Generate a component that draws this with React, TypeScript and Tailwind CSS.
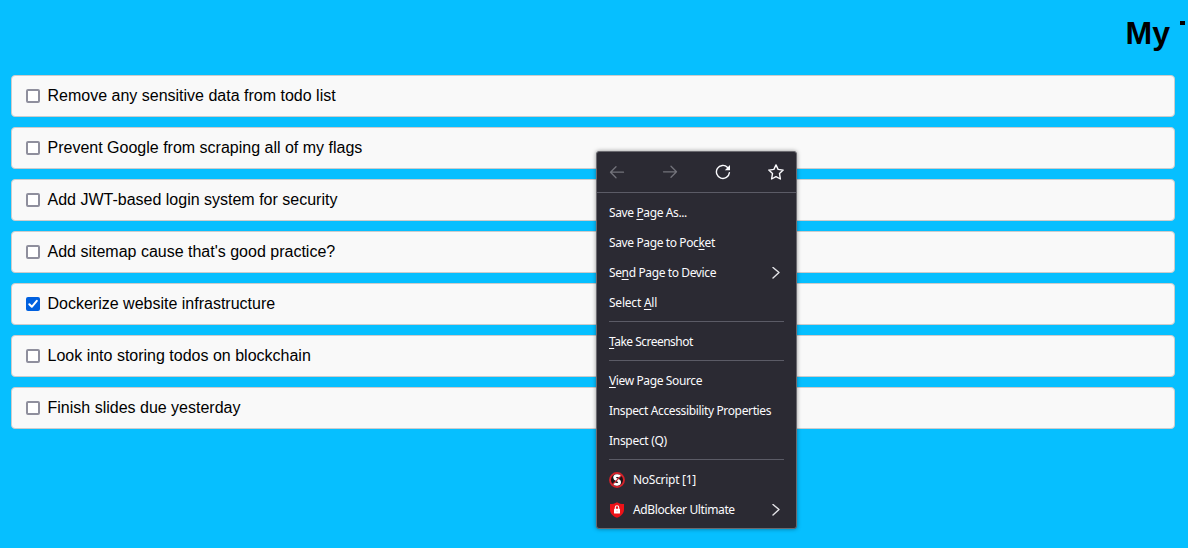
import React from "react";

const todos = [
  { text: "Remove any sensitive data from todo list" },
  { text: "Prevent Google from scraping all of my flags" },
  { text: "Add JWT-based login system for security" },
  { text: "Add sitemap cause that's good practice?" },
  { text: "Dockerize website infrastructure", done: true },
  { text: "Look into storing todos on blockchain" },
  { text: "Finish slides due yesterday" },
];

function Checkbox({ done }: { done?: boolean }) {
  if (done) {
    return (
      <span className="flex size-3.5 shrink-0 items-center justify-center rounded-[2px] bg-[#0060df]">
        <svg width="14" height="14" viewBox="0 0 14 14" fill="none" stroke="#fff" strokeWidth="2" strokeLinecap="round" strokeLinejoin="round">
          <path d="M3.3 7.3 5.8 9.8l5-6" />
        </svg>
      </span>
    );
  }
  return <span className="size-3.5 shrink-0 rounded-[2px] border-2 border-[#8f8f9d] bg-white" />;
}

function Key({ children }: { children: React.ReactNode }) {
  return <span className="underline decoration-1 underline-offset-2">{children}</span>;
}

function Chevron() {
  return (
    <svg className="ml-auto mr-1" width="8" height="12" viewBox="0 0 8 12" fill="none" stroke="#e4e4e8" strokeWidth="1.4" strokeLinecap="round" strokeLinejoin="round">
      <path d="M1 .5 7 5.5 1 11" />
    </svg>
  );
}

function Item({ icon, arrow, tracking = "tracking-[-0.38px]", children }: { icon?: React.ReactNode; arrow?: boolean; tracking?: string; children: React.ReactNode }) {
  return (
    <div className="flex h-[30px] items-center pl-3 pr-3">
      {icon && <span className="mr-2 flex size-4 shrink-0">{icon}</span>}
      <span className={`whitespace-pre ${tracking}`}>{children}</span>
      {arrow && <Chevron />}
    </div>
  );
}

function Separator() {
  return (
    <div className="h-[9px] px-3 pt-[3px]">
      <div className="h-px bg-[#5b5b66]" />
    </div>
  );
}

function Arrow({ flip }: { flip?: boolean }) {
  return (
    <svg className={flip ? "rotate-180" : ""} width="16" height="16" viewBox="0 0 16 16" fill="none" stroke="#73737b" strokeWidth="1.3" strokeLinecap="round" strokeLinejoin="round">
      <path d="M14.5 8.2h-13M7 2.7 1.5 8.2 7 13.7" />
    </svg>
  );
}

function Reload() {
  return (
    <svg width="16" height="16" viewBox="0 0 16 16" fill="none">
      <path d="M12.6 3.4A6.5 6.5 0 1 0 14.4 8.6" stroke="#fbfbfe" strokeWidth="1.4" strokeLinecap="round" />
      <path d="M15 1v4.7a.5.5 0 0 1-.5.5H9.8z" fill="#fbfbfe" />
    </svg>
  );
}

function Star() {
  return (
    <svg width="16" height="16" viewBox="0 0 16 16" fill="none" stroke="#fbfbfe" strokeWidth="1.4" strokeLinejoin="round">
      <path d="m8 .9 2.1 4.5 5.1.7-3.7 3.5.9 5.4L8 12.6l-4.4 2.4.9-5.4L.8 6.1l5.1-.7z" />
    </svg>
  );
}

function NoScriptIcon() {
  return (
    <svg width="16" height="16" viewBox="0 0 16 16" fill="none">
      <circle cx="8" cy="8" r="7" fill="#1b1518" stroke="#d4222a" strokeWidth="1.9" />
      <path d="M11.2 4.8C9.8 3 5.6 3.2 5.6 5.7c0 2.4 5 2 5 4.5 0 2.5-4.2 2.8-5.8.8" stroke="#fff" strokeWidth="2.8" />
      <path d="M3.2 12.8 12.8 3.2" stroke="#d4222a" strokeWidth="1.1" />
    </svg>
  );
}

function ShieldIcon() {
  return (
    <svg width="16" height="16" viewBox="0 0 16 16" fill="none">
      <path d="M8 .2C6.2 1.5 3.6 2 1 2v5.5c0 4 3 6.9 7 8.3 4-1.4 7-4.3 7-8.3V2C12.4 2 9.8 1.5 8 .2z" fill="#ed1218" />
      <path d="M6.3 7V5.4a1.7 1.7 0 0 1 3.4 0V7" stroke="#fff" strokeWidth="1.1" />
      <rect x="5" y="6.8" width="6" height="4.7" rx=".5" fill="#fff" />
      <path d="M8 8.5v1.4" stroke="#f99" strokeWidth=".8" />
    </svg>
  );
}

function ContextMenu() {
  return (
    <div className="absolute left-[596px] top-[151px] h-[378px] w-[201px] rounded-[3px] border border-[#6b6a70] bg-[#2b2a33] font-['Noto_Sans','Open_Sans',sans-serif] text-[12px] leading-4 text-[#fbfbfe] shadow-[0_0_4px_rgba(0,0,0,0.4)]">
      <div className="flex h-10 items-center justify-between px-3">
        <Arrow />
        <Arrow flip />
        <Reload />
        <Star />
      </div>
      <div className="mb-[5px] h-px bg-[#5b5b66]" />
      <Item>Save <Key>P</Key>age As...</Item>
      <Item>Save Page to Poc<Key>k</Key>et</Item>
      <Item arrow>Se<Key>n</Key>d Page to Device</Item>
      <Item tracking="tracking-[-0.22px]">Select <Key>A</Key>ll</Item>
      <Separator />
      <Item tracking="tracking-[-0.52px]"><Key>T</Key>ake Screenshot</Item>
      <Separator />
      <Item><Key>V</Key>iew Page Source</Item>
      <Item tracking="tracking-[-0.36px]">Inspect Accessibility Properties</Item>
      <Item tracking="tracking-[-0.3px]">Inspect (Q)</Item>
      <Separator />
      <Item icon={<NoScriptIcon />} tracking="tracking-[-0.28px]">NoScript [1]</Item>
      <Item icon={<ShieldIcon />} arrow>AdBlocker Ultimate</Item>
    </div>
  );
}

export default function App() {
  return (
    <div className="relative h-[548px] w-[1188px] overflow-hidden bg-[#06bfff] font-['Liberation_Sans',Arial,sans-serif] text-black">
      <header className="flex h-[75px] justify-end pr-[3px] pt-[15px]">
        <h1 className="mr-2.5 text-[32px] font-bold leading-9">My</h1>
        <span className="mt-1.5 h-1 w-[5px] bg-black" />
      </header>
      <ul className="flex flex-col gap-2.5 pl-[11px] pr-[13px]">
        {todos.map((todo) => (
          <li key={todo.text} className="flex h-[42px] items-center rounded-[4px] border border-[#ccc] bg-[#f9f9f9] pl-3.5">
            <Checkbox done={todo.done} />
            <span className="ml-[7.5px] text-base leading-5">{todo.text}</span>
          </li>
        ))}
      </ul>
      <ContextMenu />
    </div>
  );
}
